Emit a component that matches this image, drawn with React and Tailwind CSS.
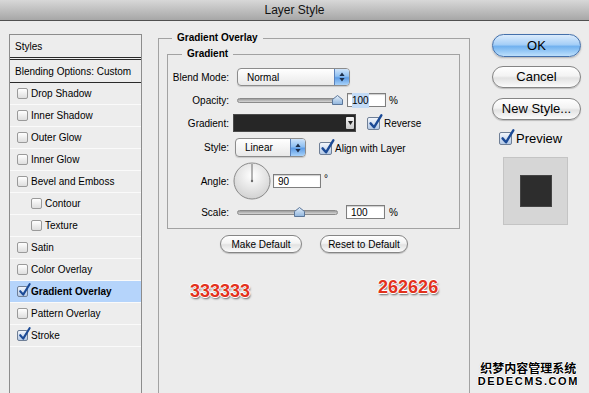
import React from 'react';

const styleItems = [
  { label: 'Drop Shadow' },
  { label: 'Inner Shadow' },
  { label: 'Outer Glow' },
  { label: 'Inner Glow' },
  { label: 'Bevel and Emboss' },
  { label: 'Contour', indent: true },
  { label: 'Texture', indent: true },
  { label: 'Satin' },
  { label: 'Color Overlay' },
  { label: 'Gradient Overlay', checked: true, active: true },
  { label: 'Pattern Overlay' },
  { label: 'Stroke', checked: true },
];

function CheckBox({ checked, big }) {
  const box = big ? 'w-[13px] h-[13px]' : 'w-[11px] h-[11px]';
  const fill = checked
    ? 'bg-linear-to-b from-[#f2f6fc] to-[#b4c9e6] border-[#6f7f96]'
    : 'bg-linear-to-b from-white to-[#dedede] border-[#9a9a9a]';
  return (
    <span className={`relative inline-block shrink-0 rounded-[2px] border ${box} ${fill}`}>
      {checked && (
        <svg
          className="absolute left-[0px] top-[-4px]"
          width={big ? 15 : 13}
          height={big ? 16 : 14}
          viewBox="0 0 13 14"
        >
          <path
            d="M2.2 8.2 L5.2 11.6 L11.6 1.2"
            stroke="#1b4a96"
            strokeWidth="2.1"
            fill="none"
            strokeLinecap="round"
            strokeLinejoin="round"
          />
        </svg>
      )}
    </span>
  );
}

function PopUp({ value, className }) {
  return (
    <div
      className={`flex overflow-hidden rounded-[4px] border border-[#8c8c8c] bg-linear-to-b from-white to-[#e9e9e9] shadow-[0_1px_1px_rgba(0,0,0,0.15)] ${className}`}
    >
      <span className="flex flex-1 items-center pl-[9px]">{value}</span>
      <span className="flex w-[15px] items-center justify-center border-l border-[#5b82bb] bg-[linear-gradient(#cfe4fa,#8fc0f2_45%,#5d9ce6_55%,#a8d2fa)]">
        <svg width="6" height="10" viewBox="0 0 6 10">
          <path d="M3 0.5 L5.6 4 H0.4z M3 9.5 L5.6 6 H0.4z" fill="#1d2f4c" />
        </svg>
      </span>
    </div>
  );
}

function Slider({ pos }) {
  return (
    <div className="relative flex h-[12px] w-[101px] items-center">
      <div className="h-[5px] w-full rounded-full border border-[#8a8a8a] bg-linear-to-b from-[#9c9c9c] to-[#d6d6d6]" />
      <svg className="absolute top-[1px]" style={{ left: pos - 5 }} width="11" height="10" viewBox="0 0 11 10">
        <defs>
          <linearGradient id={`th${pos}`} x1="0" y1="0" x2="0" y2="1">
            <stop offset="0" stopColor="#e4effb" />
            <stop offset="1" stopColor="#8fb4dc" />
          </linearGradient>
        </defs>
        <path d="M5.5 0.5 L10.5 4.5 V9.5 H0.5 V4.5z" fill={`url(#th${pos})`} stroke="#5b7699" />
      </svg>
    </div>
  );
}

function Field({ children, className }) {
  return (
    <div
      className={`flex h-[14px] items-center border border-[#7e7e7e] bg-white pl-[4px] shadow-[inset_0_1px_1px_rgba(0,0,0,0.2)] ${className}`}
    >
      {children}
    </div>
  );
}

function Dial() {
  return (
    <svg className="ml-[4px] shrink-0" width="38" height="38" viewBox="0 0 38 38">
      <defs>
        <radialGradient id="dial" cx="0.5" cy="0.35" r="0.65">
          <stop offset="0" stopColor="#ffffff" />
          <stop offset="1" stopColor="#d2d2d2" />
        </radialGradient>
      </defs>
      <circle cx="19" cy="19" r="18" fill="url(#dial)" stroke="#8a8a8a" />
      <line x1="19" y1="19" x2="19" y2="2" stroke="#6a6a6a" strokeWidth="1" />
      <circle cx="19" cy="19" r="1.2" fill="#6a6a6a" />
    </svg>
  );
}

function Pill({ children, className }) {
  return (
    <div
      className={`flex items-center justify-center rounded-full border border-[#858585] bg-[linear-gradient(#ffffff,#f3f3f3_45%,#e2e2e2_55%,#fbfbfb)] shadow-[0_1px_1px_rgba(0,0,0,0.2)] ${className}`}
    >
      {children}
    </div>
  );
}

export default function App() {
  return (
    <div className="relative h-[393px] w-[589px] overflow-hidden bg-[#ececec] font-['Liberation_Sans',Arial,sans-serif] text-[10px] text-black">
      {/* title bar */}
      <div className="flex h-[21px] items-center justify-center border-b border-[#505050] bg-linear-to-b from-[#d8d8d8] to-[#a7a7a7] text-[12px] text-[#111]">
        Layer Style
      </div>

      <div className="flex h-[372px]">
        {/* styles list */}
        <div className="ml-[9px] mt-[13px] h-[380px] w-[133px] shrink-0 border border-[#8c8c8c] bg-[#ededed]">
          <div className="flex h-[22px] items-center pl-[5px]">Styles</div>
          <div className="h-[3px] border-y border-[#2a2a2a]" />
          <div className="flex h-[23px] items-center border-b border-[#2a2a2a] pl-[5px]">
            Blending Options: Custom
          </div>
          {styleItems.map((item) => (
            <div
              key={item.label}
              className={`flex h-[22px] items-center gap-[3px] border-b border-[#fafafa] ${
                item.indent ? 'pl-[21px]' : 'pl-[7px]'
              } ${item.active ? 'bg-[#b5d4fb] font-bold' : ''}`}
            >
              <CheckBox checked={item.checked} />
              <span>{item.label}</span>
            </div>
          ))}
        </div>

        {/* gradient overlay */}
        <fieldset className="ml-[16px] mt-[11px] h-[380px] w-[312px] shrink-0 border border-[#a2a2a2]">
          <legend className="ml-[13px] px-[5px] font-bold leading-[12px]">Gradient Overlay</legend>

          <fieldset className="ml-[8px] mt-[4px] w-[293px] border border-[#a2a2a2] pb-[9px]">
            <legend className="ml-[14px] px-[5px] font-bold leading-[12px]">Gradient</legend>

            <div className="mt-[8px] flex items-center">
              <span className="w-[61px] shrink-0 text-right">Blend Mode:</span>
              <PopUp value="Normal" className="ml-[8px] h-[18px] w-[113px]" />
            </div>

            <div className="mt-[7px] flex h-[14px] items-center">
              <span className="w-[61px] shrink-0 text-right">Opacity:</span>
              <div className="ml-[8px]">
                <Slider pos={100} />
              </div>
              <Field className="ml-[9px] w-[39px]">
                <span className="bg-[#c3dbf6]">100</span>
              </Field>
              <span className="ml-[3px]">%</span>
            </div>

            <div className="mt-[7px] flex items-center">
              <span className="w-[61px] shrink-0 text-right">Gradient:</span>
              <div className="ml-[4px] flex h-[18px] w-[123px] border border-[#4a4a4a] bg-[#262626] p-[1px]">
                <div className="flex-1 bg-[#262626]" />
                <div className="my-[1px] flex w-[8px] items-center justify-center rounded-[1px] bg-linear-to-b from-[#f6f6f6] to-[#c9c9c9]">
                  <svg width="5" height="4" viewBox="0 0 5 4">
                    <path d="M0 0 H5 L2.5 4z" fill="#222" />
                  </svg>
                </div>
              </div>
              <span className="ml-[11px] flex items-center gap-[4px]">
                <CheckBox checked big />
                <span>Reverse</span>
              </span>
            </div>

            <div className="mt-[6px] flex items-center">
              <span className="w-[61px] shrink-0 text-right">Style:</span>
              <PopUp value="Linear" className="ml-[6px] h-[19px] w-[71px]" />
              <span className="ml-[13px] mt-[2px] flex items-center gap-[3px]">
                <CheckBox checked big />
                <span>Align with Layer</span>
              </span>
            </div>

            <div className="mt-[5px] flex items-center">
              <span className="w-[61px] shrink-0 text-right">Angle:</span>
              <Dial />
              <Field className="ml-[2px] w-[48px]">90</Field>
              <span className="mb-[6px] ml-[3px]">°</span>
            </div>

            <div className="mt-[5px] flex h-[14px] items-center">
              <span className="w-[61px] shrink-0 text-right">Scale:</span>
              <div className="ml-[8px]">
                <Slider pos={62} />
              </div>
              <Field className="ml-[8px] w-[39px]">100</Field>
              <span className="ml-[4px]">%</span>
            </div>
          </fieldset>

          <div className="mt-[6px] flex">
            <Pill className="ml-[61px] h-[18px] w-[82px]">Make Default</Pill>
            <Pill className="ml-[18px] h-[18px] w-[88px]">Reset to Default</Pill>
          </div>

          <div className="flex items-start text-[18px] font-bold leading-[18px] text-[#e2321d] [text-shadow:1px_0_0_#fff,-1px_0_0_#fff,0_-1px_0_#fff,0_1px_0_#fff,1px_2px_2px_rgba(0,0,0,0.55)]">
            <span className="ml-[31px] mt-[29px]">333333</span>
            <span className="ml-[128px] mt-[25px]">262626</span>
          </div>
        </fieldset>

        {/* buttons */}
        <div className="ml-[22px] mt-[13px] flex w-[89px] shrink-0 flex-col text-[13px]">
          <div className="flex h-[23px] items-center justify-center rounded-full border border-[#4470ab] bg-[linear-gradient(#dcecfc,#a6cff7_45%,#72b2ef_55%,#bde0fc)] shadow-[0_1px_2px_rgba(0,0,0,0.25)]">
            OK
          </div>
          <Pill className="mt-[9px] h-[22px]">Cancel</Pill>
          <Pill className="mt-[10px] h-[22px]">New Style...</Pill>
          <div className="ml-[7px] mt-[9px] flex items-center gap-[4px]">
            <CheckBox checked big />
            <span>Preview</span>
          </div>
          <div className="ml-[11px] mt-[8px] flex h-[68px] w-[65px] items-center justify-center border border-[#c4c4c4] bg-[#d6d6d6]">
            <div className="h-[32px] w-[32px] border border-[#444] bg-[#2d2d2d]" />
          </div>
        </div>
      </div>

      {/* watermark */}
      <div className="absolute bottom-[6px] right-[10px] flex flex-col items-center leading-none text-black [text-shadow:1px_0_0_#fff,-1px_0_0_#fff,0_1px_0_#fff,0_-1px_0_#fff,0_0_2px_#999]">
        <span className="font-['Noto_Sans_CJK_SC',sans-serif] text-[12px] font-bold">织梦内容管理系统</span>
        <span className="mt-[2px] text-[11px] font-bold tracking-[1.6px]">DEDECMS.COM</span>
      </div>
    </div>
  );
}
